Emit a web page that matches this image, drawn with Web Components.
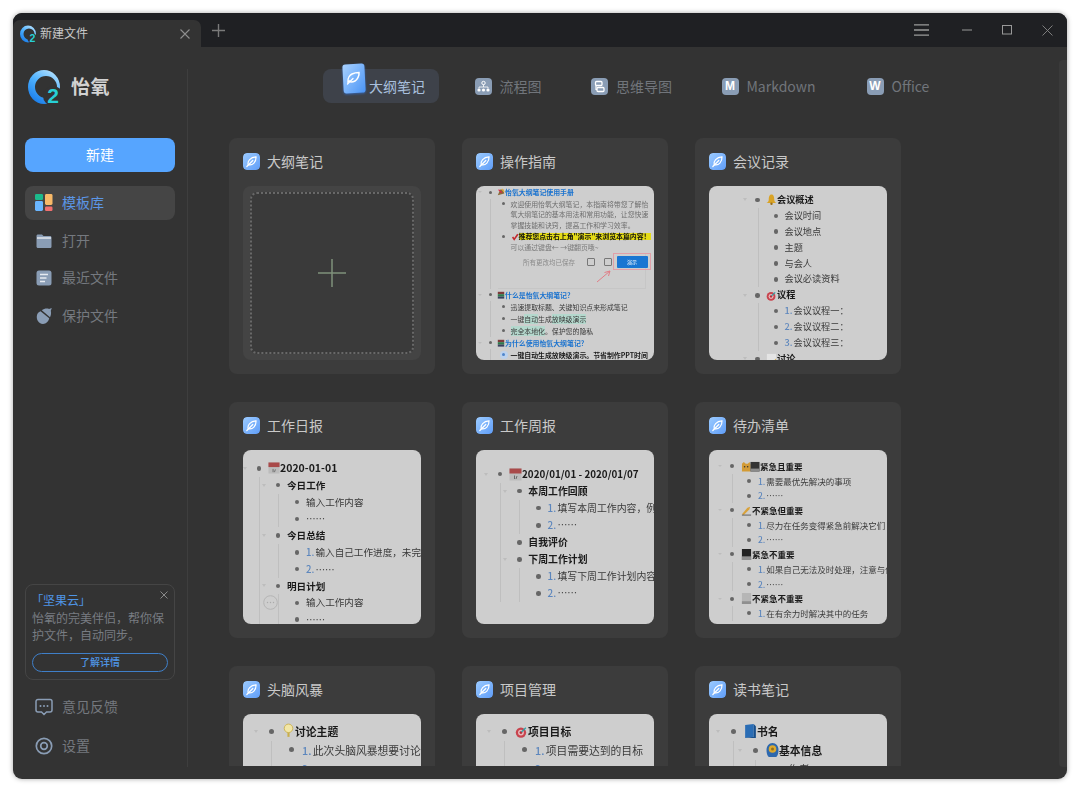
<!DOCTYPE html>
<html lang="zh"><head><meta charset="utf-8"><title>怡氧</title>
<style>
html,body{margin:0;padding:0;background:#fff;}
body{font-family:"Noto Sans CJK SC","Noto Sans",sans-serif;}
</style></head><body>
<app-window>
  <title-bar slot="top"></title-bar>
  <app-sidebar slot="side">
    <side-item icon="tpl" active>模板库</side-item>
    <side-item icon="folder">打开</side-item>
    <side-item icon="doc">最近文件</side-item>
    <side-item icon="acorn">保护文件</side-item>
    <promo-card slot="promo"></promo-card>
    <side-item slot="foot" icon="chat">意见反馈</side-item>
    <side-item slot="foot" icon="gear">设置</side-item>
  </app-sidebar>
  <mode-nav slot="nav">
    <nav-item active icon="pen">大纲笔记</nav-item>
    <nav-item icon="flow">流程图</nav-item>
    <nav-item icon="mind">思维导图</nav-item>
    <nav-item icon="M" style="margin-right:1.5px">Markdown</nav-item>
    <nav-item icon="W">Office</nav-item>
  </mode-nav>
  <tpl-grid slot="grid">
    <tpl-card name="大纲笔记"><blank-doc></blank-doc></tpl-card>
    <tpl-card name="操作指南"><tpl-outline tpl="guide"></tpl-outline></tpl-card>
    <tpl-card name="会议记录"><tpl-outline tpl="meeting"></tpl-outline></tpl-card>
    <tpl-card name="工作日报"><tpl-outline tpl="daily"></tpl-outline></tpl-card>
    <tpl-card name="工作周报"><tpl-outline tpl="weekly"></tpl-outline></tpl-card>
    <tpl-card name="待办清单"><tpl-outline tpl="todo"></tpl-outline></tpl-card>
    <tpl-card name="头脑风暴"><tpl-outline tpl="brain"></tpl-outline></tpl-card>
    <tpl-card name="项目管理"><tpl-outline tpl="project"></tpl-outline></tpl-card>
    <tpl-card name="读书笔记"><tpl-outline tpl="reading"></tpl-outline></tpl-card>
  </tpl-grid>
</app-window>
<script>
const FONT='"Noto Sans CJK SC","Noto Sans",sans-serif';
function logo(size,id){return `<svg style="display:block;flex:none;margin-bottom:${-size*5/32}px" width="${size}" height="${size*40/32}" viewBox="0 0 32 40">
<defs><linearGradient id="${id}" x1="0.8" y1="0" x2="0.2" y2="1"><stop offset="0" stop-color="#b8e3ff"/><stop offset=".45" stop-color="#4fb2ff"/><stop offset="1" stop-color="#1679e8"/></linearGradient></defs>
<path fill="url(#${id})" fill-rule="evenodd" d="M16 1A16 17 0 1 1 16 35A16 17 0 1 1 16 1ZM18 7A11 11 0 1 0 18 29A11 11 0 1 0 18 7Z"/>
<circle cx="25" cy="27" r="10" fill="#333"/>
<text x="25" y="34" text-anchor="middle" font-family="Liberation Sans,sans-serif" font-weight="700" font-size="21" fill="#27d0d6">2</text></svg>`;}
const penMark=`<path d="M5.2 11.7C4.200 8 7.400 4.300 13 3.900C13.300 8.900 9.700 13 5.200 11.700Z" fill="none" stroke="#fff" stroke-width="1.200"/><path d="M3.800 13.500L9.800 7.500" stroke="#fff" stroke-width="1.200" stroke-linecap="round"/>`;

const define=(n,c)=>customElements.define(n,c);
class Base extends HTMLElement{
  render(html){ if(!this.shadowRoot) this.attachShadow({mode:'open'}); this.shadowRoot.innerHTML=html; }
}

define('app-window',class extends Base{connectedCallback(){this.render(`<style>
:host{display:flex;flex-direction:column;box-sizing:border-box;width:1054px;height:766px;margin:13px;background:#333;border-radius:9px;overflow:hidden;box-shadow:0 0 5px rgba(0,0,0,.35);font-family:${FONT};}
.body{flex:1;min-height:0;display:flex;}
.main{flex:1;min-width:0;display:flex;}
.col{flex:1;min-width:0;display:flex;flex-direction:column;}
.bar{flex:none;width:8px;margin:13px 0 12px;background:#3a3a3a;border-radius:4px 0 0 4px;}
</style><slot name="top"></slot><div class="body"><slot name="side"></slot><div class="main"><div class="col"><slot name="nav"></slot><slot name="grid"></slot></div><div class="bar"></div></div></div>`);}});

define('title-bar',class extends Base{connectedCallback(){this.render(`<style>
:host{display:flex;flex:none;height:34px;background:#1f2023;align-items:stretch;color:#ccc;}
.tab{box-sizing:border-box;width:188px;height:27px;margin-top:7px;background:#333;border-radius:7px 7px 0 0;display:flex;align-items:center;padding:0 11px 0 7px;gap:4px;font-size:12px;color:#c8c8c8;}
.tab span{flex:1;padding-bottom:2px;}
.plus{width:34px;display:flex;align-items:center;justify-content:center;}
.sp{flex:1;}
.ctl{display:flex;align-items:center;justify-content:center;width:40px;}
svg{display:block;}
</style>
<div class="tab">${logo(16,'lg1')}<span>新建文件</span>
<svg width="10" height="10" viewBox="0 0 10 10"><path d="M.5.5L9.5 9.5M9.5.5L.5 9.5" stroke="#8d8d8d" stroke-width="1.1"/></svg></div>
<div class="plus"><svg width="13" height="13" viewBox="0 0 13 13"><path d="M6.5 0V13M0 6.5H13" stroke="#7a7a7a" stroke-width="1.4"/></svg></div>
<div class="sp"></div>
<div class="ctl" style="margin-right:6px"><svg width="15" height="12" viewBox="0 0 15 12"><path d="M0 .8H15M0 6H15M0 11.2H15" stroke="#9a9a9a" stroke-width="1.3"/></svg></div>
<div class="ctl"><svg width="10" height="2" viewBox="0 0 10 2"><path d="M0 1H10" stroke="#999" stroke-width="1"/></svg></div>
<div class="ctl"><svg width="10" height="10" viewBox="0 0 10 10"><rect x=".5" y=".5" width="9" height="8.5" fill="none" stroke="#999" stroke-width="1"/></svg></div>
<div class="ctl"><svg width="11" height="11" viewBox="0 0 11 11"><path d="M.5.5L10.5 10.5M10.5.5L.5 10.5" stroke="#888" stroke-width=".9"/></svg></div>`);}});

define('app-sidebar',class extends Base{connectedCallback(){this.render(`<style>
:host{display:flex;flex-direction:column;flex:none;box-sizing:border-box;width:175px;margin:22px 0 12px;padding:0 12px;border-right:1px solid #3e3e3e;}
.brand{display:flex;align-items:flex-start;height:35px;margin-left:3px;gap:11px;}
.brand b{font-size:19px;line-height:33px;letter-spacing:.5px;color:#d2d2d2;font-weight:700;}
.new{height:34px;margin-top:34px;border-radius:8px;background:#56a5ff;color:#fff;font-size:14px;display:flex;align-items:center;justify-content:center;}
.new span{padding-bottom:2px;}
.list{display:flex;flex-direction:column;gap:3.5px;margin-top:14px;}
.sp{flex:1;}
.foot{display:flex;flex-direction:column;gap:4.5px;margin-top:10px;margin-bottom:4.5px;}
</style>
<div class="brand">${logo(32,'lg2')}<b>怡氧</b></div>
<div class="new"><span>新建</span></div>
<div class="list"><slot></slot></div>
<div class="sp"></div>
<slot name="promo"></slot>
<div class="foot"><slot name="foot"></slot></div>`);}});

const sideIcons={
tpl:`<rect x="0" y="0" width="8" height="6" rx="1.2" fill="#1cbb8c"/><rect x="0" y="7" width="8" height="10" rx="1.4" fill="#6ab6ff"/><rect x="10" y="0" width="7.5" height="11" rx="1.4" fill="#f8b968"/><rect x="10" y="12.5" width="7.5" height="4.5" rx="1.2" fill="#f2706f"/>`,
folder:`<path d="M1.500 4C1.500 3 2.200 2.500 3 2.500H7L8.500 4H15C15.900 4 16.500 4.700 16.500 5.500V14.500C16.500 15.500 15.800 16 15 16H3C2.100 16 1.500 15.300 1.500 14.500Z" fill="#8a9db5"/><path d="M2 6H16" stroke="#e3e8ee" stroke-width="1.400"/>`,
doc:`<rect x="1.500" y="1.500" width="15" height="15" rx="2.500" fill="#8a9db5"/><path d="M5 5.500H13M5 9H11.500M5 12.500H10" stroke="#e6eaf0" stroke-width="1.400"/>`,
acorn:`<path d="M2 8C1 12 3 16.500 8 17C11 17 13.500 14.500 14.200 11.300L5.500 4.200C3.500 5 2.500 6 2 8Z" fill="#8a9db5"/><path d="M6.800 3.200C9 1.400 12.500 1.200 14 2L16.800 1L15.800 3.700C16.400 6 16 8.300 15 10.300Z" fill="#8a9db5"/>`,
chat:`<path d="M3 1.500H15A2 2 0 0 1 17 3.500V12A2 2 0 0 1 15 14H11.500L9 16.500L6.500 14H3A2 2 0 0 1 1 12V3.500A2 2 0 0 1 3 1.500Z" fill="none" stroke="#8a9db5" stroke-width="1.5"/><circle cx="5.500" cy="8" r="1" fill="#8a9db5"/><circle cx="9" cy="8" r="1" fill="#8a9db5"/><circle cx="12.500" cy="8" r="1" fill="#8a9db5"/>`,
gear:`<circle cx="9" cy="9" r="7.700" fill="none" stroke="#8a9db5" stroke-width="1.700"/><circle cx="9" cy="9" r="3.300" fill="none" stroke="#8a9db5" stroke-width="1.700"/>`
};
define('side-item',class extends Base{connectedCallback(){const a=this.hasAttribute('active');this.render(`<style>
:host{display:flex;align-items:center;height:34px;border-radius:8px;padding-left:10px;gap:9px;font-size:14px;color:${a?'#5b96e6':'#75797f'};background:${a?'#454545':'transparent'};}
svg{flex:none;display:block;}
span{padding-bottom:2px;}
</style><svg width="18" height="18" viewBox="0 0 18 18">${sideIcons[this.getAttribute('icon')]}</svg><span><slot></slot></span>`);}});

define('promo-card',class extends Base{connectedCallback(){this.render(`<style>
:host{display:block;position:relative;box-sizing:border-box;height:96px;border:1px solid #454545;border-radius:8px;padding:6px 6px 0 6px;font-size:12px;line-height:17px;color:#787c82;}
.t{color:#4f95e6;margin:0 0 1px 5px;font-feature-settings:"palt";}
.x{position:absolute;right:6px;top:6px;display:block;}
.b{height:19px;box-sizing:border-box;margin-top:10px;border:1px solid #3f7fc8;border-radius:10px;color:#4f95e6;display:flex;align-items:center;justify-content:center;line-height:1;font-size:10px;font-weight:500;padding-bottom:1px;}
</style><svg class="x" width="8" height="8" viewBox="0 0 8 8"><path d="M.5.5L7.500 7.500M7.500.5L.5 7.500" stroke="#8a8a8a" stroke-width="1"/></svg>
<div class="t">「坚果云」</div><div>怡氧的完美伴侣，帮你保<br>护文件，自动同步。</div><div class="b">了解详情</div>`);}});

define('mode-nav',class extends Base{connectedCallback(){this.render(`<style>
:host{display:flex;flex:none;height:34px;margin-top:22px;padding-left:135px;gap:21.5px;}
</style><slot></slot>`);}});

const navIcons={
flow:`<circle cx="8.500" cy="5" r="1.700" fill="none" stroke="#fff" stroke-width="1"/><path d="M8.500 6.500V9M4 10.500V9H13V10.500" fill="none" stroke="#fff" stroke-width=".8"/><circle cx="4" cy="12" r="1.600" fill="#fff"/><circle cx="8.500" cy="12" r="1.600" fill="#fff"/><circle cx="13" cy="12" r="1.600" fill="#fff"/>`,
mind:`<rect x="4.500" y="3.500" width="6.500" height="4" rx="1" fill="none" stroke="#fff" stroke-width="1.300"/><rect x="6" y="9.500" width="7" height="4" rx="1" fill="none" stroke="#fff" stroke-width="1.300"/><path d="M5 7.500V11.500H6" fill="none" stroke="#fff" stroke-width="1.200"/>`
};
define('nav-item',class extends Base{connectedCallback(){
 const a=this.hasAttribute('active'),ic=this.getAttribute('icon');
 let icon;
 if(a) icon=`<div class="pop"><svg width="24" height="32" viewBox="0 0 24 32"><defs><linearGradient id="pg" x1="0" y1="0" x2="1" y2="1"><stop offset="0" stop-color="#a9d2ff"/><stop offset="1" stop-color="#4a94f6"/></linearGradient></defs><rect x="1" y="1" width="22" height="29" rx="3" fill="url(#pg)" transform="rotate(-3 12 15)"/><path d="M6 19C5.500 15 8 12 10 11C12 10 15 9.500 17 9.500C17.500 13 15 17 13 18C11 19 8.500 19.500 7.500 18Z" fill="none" stroke="#fff" stroke-width="1.500"/><path d="M5.500 21L11 15.500" stroke="#fff" stroke-width="1.300" stroke-linecap="round"/></svg></div>`;
 else if(ic==='M'||ic==='W') icon=`<div class="ic"><i>${ic}</i></div>`;
 else icon=`<div class="ic"><svg width="17" height="17" viewBox="0 0 17 17">${navIcons[ic]}</svg></div>`;
 this.render(`<style>
:host{display:flex;position:relative;align-items:center;height:34px;padding:0 14px;border-radius:8px;font-size:14px;color:${a?'#a9c0de':'#71757b'};background:${a?'#3e424a':'transparent'};}
.ic{width:17px;height:17px;border-radius:4px;background:#8a9db5;margin-right:8px;display:flex;align-items:center;justify-content:center;flex:none;}
.ic i{font:700 12px "Liberation Sans",sans-serif;color:#fff;}
.ic svg{display:block;}
.sp{width:32px;flex:none;}
.pop{position:absolute;left:19px;top:-6px;filter:drop-shadow(0 1px 1px rgba(50,120,230,.6));}
.pop svg{display:block;}
.tx{padding-bottom:1px;}
</style>${a?icon+'<div class="sp"></div>':icon}<span class="tx"><slot></slot></span>`);
}});

define('tpl-grid',class extends Base{connectedCallback(){this.render(`<style>
:host{display:block;flex:1;min-height:0;overflow:hidden;margin:35px 0 13px 41px;}
.g{display:grid;grid-template-columns:repeat(3,206px);grid-auto-rows:236px;column-gap:27px;row-gap:28px;}
</style><div class="g"><slot></slot></div>`);}});

define('tpl-card',class extends Base{connectedCallback(){this.render(`<style>
:host{display:flex;flex-direction:column;box-sizing:border-box;height:236px;padding:15px 14px 0;background:#3c3c3c;border-radius:8px;}
.h{display:flex;align-items:center;gap:7px;height:17px;font-size:14px;color:#c9c9c9;white-space:nowrap;}
.h svg{display:block;flex:none;border-radius:4px;}
.h span{padding-bottom:2px;}
.b{margin-top:16px;height:174px;}
</style><div class="h"><svg width="17" height="17" viewBox="0 0 17 17"><defs><linearGradient id="c" x1="0" y1="0" x2="1" y2="1"><stop offset="0" stop-color="#9ccbff"/><stop offset="1" stop-color="#5f9df8"/></linearGradient></defs><rect width="17" height="17" rx="4" fill="url(#c)"/>${penMark}</svg><span>${this.getAttribute('name')}</span></div><div class="b"><slot></slot></div>`);}});

define('blank-doc',class extends Base{connectedCallback(){this.render(`<style>
:host{display:flex;box-sizing:border-box;width:178px;height:174px;padding:6px 7px;background:#444;border-radius:8px;}
.d{flex:1;display:flex;align-items:center;justify-content:center;background:#3a3a3a;border:2px dotted #686868;border-radius:7px;}
svg{display:block;}
</style><div class="d"><svg width="28" height="28" viewBox="0 0 28 28"><path d="M14 0V28M0 14H28" stroke="#7f917b" stroke-width="1.500"/></svg></div>`);}});

/* tiny colour pictures used as emoji in the outlines */
const em={
bell:w=>`<svg width="${w}" height="${w}" viewBox="0 0 12 12"><path d="M6 .5C3.500 .5 3 3.500 3 6C3 8 2 9 .5 9.800H11.500C10 9 9 8 9 6C9 3.500 8.500 .5 6 .5Z" fill="#d9a326"/><circle cx="6" cy="10.600" r="1.300" fill="#9b6d12"/></svg>`,
target:w=>`<svg width="${w}" height="${w}" viewBox="0 0 12 12"><circle cx="5.500" cy="7" r="4.800" fill="#c8444e"/><circle cx="5.500" cy="7" r="2.700" fill="#e7b9bb"/><circle cx="5.500" cy="7" r="1.300" fill="#b82a36"/><path d="M6 6.500L10 2.500" stroke="#2aa3a8" stroke-width="1.200"/></svg>`,
paper:w=>`<svg width="${w}" height="${w}" viewBox="0 0 12 12"><rect x="1" y="1" width="10" height="10" fill="#e4e4e4"/><path d="M6 11L11 6V11Z" fill="#d2a640"/></svg>`,
cal:w=>`<svg width="${w}" height="${w}" viewBox="0 0 13 13"><rect x=".5" y=".5" width="12" height="12" fill="#bcbcbc"/><rect x=".5" y=".5" width="12" height="5" fill="#a94a4a"/><path d="M5.500 7.500V11M8 8L7 11" stroke="#555" stroke-width=".8"/></svg>`,
cone:w=>`<svg width="${w}" height="${w}" viewBox="0 0 10 10"><path d="M1 9L4 2H8L9 7Z" fill="#8a6a3a"/><path d="M2 2L6 6" stroke="#d24" stroke-width="1.500"/><path d="M6 1L9 5" stroke="#e4b23c" stroke-width="1.500"/></svg>`,
check:w=>`<svg width="${w}" height="${w}" viewBox="0 0 10 10"><path d="M2 5L4 8L8.500 1.500" fill="none" stroke="#c2282d" stroke-width="2"/></svg>`,
books:w=>`<svg width="${w}" height="${w}" viewBox="0 0 10 10"><rect x="1" y="1" width="8" height="3" fill="#7d3a3a"/><rect x="1" y="4" width="8" height="3" fill="#2f7a4c"/><rect x="1" y="7" width="8" height="2.500" fill="#39405e"/></svg>`,
bulb:w=>`<svg width="${w}" height="${w+3}" viewBox="0 0 12 15"><circle cx="6" cy="5" r="4" fill="#f2e6a6" stroke="#c9ae4a" stroke-width=".8"/><path d="M5 9V13H7V9" fill="#c9ae4a"/></svg>`,
book:w=>`<svg width="${w}" height="${w+2}" viewBox="0 0 12 14"><path d="M1 1L9 0V12L1 13Z" fill="#2a6db5"/><path d="M9 0L11 2V13L1 13L9 12Z" fill="#174f8c"/></svg>`,
badge:w=>`<svg width="${w}" height="${w+2}" viewBox="0 0 13 15"><path d="M6.500 0C3 0 .5 3 .5 7C.5 11 2 14 3 14H10C11 14 12.500 11 12.500 7C12.500 3 10 0 6.500 0Z" fill="#2d68ae"/><circle cx="6.500" cy="6" r="3.800" fill="#dca92f"/><circle cx="6.500" cy="6" r="1.500" fill="#94701a"/></svg>`,
cat:w=>`<svg width="${w}" height="${w*.6}" viewBox="0 0 20 12"><path d="M1 3L3 1L5 3H7L9 1L10 4V11H1Z" fill="#d39b35"/><circle cx="3.800" cy="6" r=".8" fill="#333"/><circle cx="7" cy="6" r=".8" fill="#333"/><rect x="10" y="1" width="9.500" height="10" fill="#333"/><rect x="10" y="8" width="9.500" height="3" fill="#8b8b8b"/></svg>`,
write:w=>`<svg width="${w}" height="${w}" viewBox="0 0 12 12"><path d="M1 10L7 3L10 2L9 5L3 11Z" fill="#d9a23a"/><path d="M1 11H11" stroke="#555" stroke-width="1"/></svg>`,
black:w=>`<svg width="${w}" height="${w}" viewBox="0 0 12 12"><rect x="1" y="0" width="10" height="12" fill="#222"/><rect x="1" y="8" width="10" height="4" fill="#8f8f8f"/></svg>`,
gray:w=>`<svg width="${w}" height="${w}" viewBox="0 0 12 12"><rect x="1" y="0" width="10" height="12" fill="#b6b6b6"/><rect x="1" y="9" width="10" height="3" fill="#8f8f8f"/></svg>`
};
const N=(t,c,o)=>Object.assign({t,c},o||{});
const B=(t,c,o)=>N(t,c,Object.assign({b:1},o||{}));
const num=(n,t)=>({n,t});
const HL='#b4d8cd';
const mark=s=>`<span style="background:${HL}">${s}</span>`;
const configs={
 meeting:{pad:6,left:30,step:18.5,tw:12,dw:13,mr:2,rh:15.9,fs:9.2,iw:11,ds:4.5,tree:[
  B('会议概述',[N('会议时间'),N('会议地点'),N('主题'),N('与会人'),N('会议必读资料')],{i:'bell'}),
  B('议程',[num('1.','会议议程一：'),num('2.','会议议程二：'),num('3.','会议议程三：')],{i:'target'}),
  B('讨论',null,{i:'paper'})]},
 daily:{pad:10,left:-4,step:19,tw:12,dw:16,mr:1,rh:16.8,fs:9.6,iw:12,ds:4.5,dots:1,tree:[
  B('2020-01-01',[B('今日工作',[N('输入工作内容'),N('……')]),B('今日总结',[num('1.','输入自己工作进度，未完成的工作'),num('2.','……')]),B('明日计划',[N('输入工作内容'),N('……')])],{i:'cal',fs:10.5})]},
 weekly:{pad:15.5,left:4,step:19.3,tw:12,dw:16,mr:1,rh:17.1,fs:9.9,iw:13,ds:4.5,tree:[
  B('2020/01/01 - 2020/01/07',[B('本周工作回顾',[num('1.','填写本周工作内容，例如完成'),num('2.','……')]),B('自我评价',null),B('下周工作计划',[num('1.','填写下周工作计划内容，例如'),num('2.','……')])],{i:'cal'})]},
 todo:{pad:9,left:6,step:17,tw:10,dw:14,mr:2,rh:14.7,fs:8.5,iw:10,ds:4,tree:[
  B('紧急且重要',[num('1.','需要最优先解决的事项'),num('2.','……')],{i:'cat',iw:19}),
  B('不紧急但重要',[num('1.','尽力在任务变得紧急前解决它们'),num('2.','……')],{i:'write',iw:11}),
  B('紧急不重要',[num('1.','如果自己无法及时处理，注意与他人沟通'),num('2.','……')],{i:'black',iw:11}),
  B('不紧急不重要',[num('1.','在有余力时解决其中的任务')],{i:'gray',iw:11})]},
 brain:{pad:8,left:7,step:20,tw:12,dw:18,mr:2,rh:18.5,fs:10.8,iw:13,ds:5,tree:[
  B('讨论主题',[num('1.','此次头脑风暴想要讨论的问题'),num('2.','……')],{i:'bulb'})]},
 project:{pad:8,left:7,step:20,tw:12,dw:18,mr:2,rh:18.5,fs:10.8,iw:13,ds:5,tree:[
  B('项目目标',[num('1.','项目需要达到的目标'),num('2.','……')],{i:'target'})]},
 reading:{pad:8,left:3,step:22,tw:12,dw:18,mr:2,rh:18.8,fs:10.8,iw:13,ds:5,tree:[
  B('书名',[B('基本信息',[N('作者：')],{i:'badge'})],{i:'book'})]},
 guide:{pad:0,left:0,step:13.5,tw:8,dw:12,mr:1,rh:12,fs:6.9,iw:8,ds:3,guide:1,tree:[
  {blue:1,b:1,i:'cone',t:'怡氧大纲笔记使用手册',c:[
    {nt:1,multi:1,gray:1,t:'欢迎使用怡氧大纲笔记，本指南将带您了解怡<br>氧大纲笔记的基本用法和常用功能，让您快速<br>掌握技能和诀窍，提高工作和学习效率。'},
    {nt:1,b:1,i:'check',yellow:1,t:'推荐您点击右上角"演示"来浏览本篇内容！',sub:'可以通过键盘← →键翻页哦~',shot:1}]},
  {blue:1,b:1,i:'books',t:'什么是怡氧大纲笔记?',c:[
    {nt:1,t:'迅速提取标题、关键知识点来形成笔记'},
    {nt:1,t:'一键'+mark('自动')+'生成'+mark('放映级演示')},
    {nt:1,t:mark('完全本地化')+'。保护您的隐私'}]},
  {blue:1,b:1,i:'books',t:'为什么使用怡氧大纲笔记?',c:[
    {nt:1,b:1,focus:1,t:'一键自动生成放映级演示。节省制作PPT时间'}]}]}
};
define('tpl-outline',class extends Base{connectedCallback(){
 const cfg=configs[this.getAttribute('tpl')];
 const shot=`<div class="shot"><div class="st"><span class="sv">所有更改均已保存</span><i class="sq"></i><i class="sq"></i><span class="pk"><span class="bt">演示</span></span></div>
 <svg class="arrow" width="18" height="16" viewBox="0 0 18 16"><path d="M1 15L14 4M14 4L8.500 5.500M14 4L12.500 9" fill="none" stroke="#e07d86" stroke-width="1"/></svg></div>`;
 const nodeHtml=(n)=>{
  const hasKids=n.c&&n.c.length;
  const style=n.fs?`font-size:${n.fs}px;`:'';
  const ic=n.i?`<span class="em" style="width:${n.iw||cfg.iw}px">${em[n.i](n.iw||cfg.iw)}</span>`:'';
  const cls=['tx',n.b?'b':'',n.blue?'blue':'',n.gray?'gray':'',n.multi?'multi':'',n.yellow?'yl':''].join(' ');
  const body=n.n?`<span class="n">${n.n}</span> ${n.t}`:n.t;
  let h=`<div class="node"><div class="row${n.multi?' mrow':''}"><span class="tri">${hasKids||(cfg.tree.includes(n))?'<i></i>':''}</span><span class="dotbox${n.focus?' fc':''}"><i></i></span>${ic}<span class="${cls}" style="${style}">${body}</span></div>`;
  if(n.sub) h+=`<div class="sub">${n.sub}</div>`;
  if(n.shot) h+=shot;
  if(hasKids) h+=`<div class="kids">${n.c.map(nodeHtml).join('')}</div>`;
  return h+'</div>';
 };
 const dots=cfg.dots?`<svg class="more" width="15" height="15" viewBox="0 0 15 15"><circle cx="7.500" cy="7.500" r="6.800" fill="none" stroke="#b4b4b4" stroke-width="1"/><circle cx="4.500" cy="7.500" r=".7" fill="#aaa"/><circle cx="7.500" cy="7.500" r=".7" fill="#aaa"/><circle cx="10.500" cy="7.500" r=".7" fill="#aaa"/></svg>`:'';
 const ds=cfg.ds||4;
 this.render(`<style>
:host{display:block;position:relative;width:178px;height:174px;overflow:hidden;background:#cecece;border-radius:8px;font-size:${cfg.fs}px;color:#3a3a3a;line-height:${cfg.rh}px;}
.in{filter:blur(.35px);padding-top:${cfg.pad}px;margin-left:${cfg.left}px;white-space:nowrap;}
.row{display:flex;align-items:center;height:${cfg.rh}px;}
.mrow{height:auto;align-items:flex-start;margin-top:.5px;}
.tri{flex:none;width:${cfg.tw}px;display:flex;justify-content:center;}
.tri i{display:block;width:0;height:0;border:${Math.max(2,cfg.fs*.26)}px solid transparent;border-top:${Math.max(2.5,cfg.fs*.34)}px solid #bdbdbd;border-bottom:0;}
.dotbox{flex:none;width:${cfg.dw}px;margin-right:${cfg.mr}px;display:flex;justify-content:center;align-items:center;}
.mrow .dotbox{height:10.800px;}
.dotbox i{display:block;width:${ds}px;height:${ds}px;border-radius:50%;background:#666;}
.fc{position:relative;}
.fc::before{content:"";position:absolute;left:50%;top:50%;width:8px;height:8px;margin:-4px;border-radius:50%;background:#bcd2ee;}
.fc i{position:relative;background:#4f86cc;}
.em{flex:none;display:flex;align-items:center;}
.em svg{display:block;}
.tx{display:inline-block;}
.b{font-weight:700;color:#1a1a1a;}
.blue{color:#1b73cf;}
.gray{color:#6f6f6f;}
.multi{line-height:10.800px;}
.yl{background:#e5dc17;color:#111;line-height:7px;padding-right:1px;}
.n{color:#5c86bd;font-weight:500;margin-right:-1px;}
.kids{padding-left:${cfg.step}px;background:linear-gradient(#bfbfbf,#bfbfbf) no-repeat ${cfg.tw+cfg.dw/2}px 0/1px 100%;}
.sub{height:9px;line-height:9px;margin-left:${cfg.tw+cfg.dw+cfg.mr}px;color:#7a7a7a;}
.shot{position:relative;box-sizing:border-box;height:36px;margin-left:${cfg.tw+cfg.dw/2-6}px;width:148px;border:1px solid #c6c6c6;border-width:0 1px 1px 0;margin-top:1px;}
.st{display:flex;align-items:center;height:18px;margin-left:25.500px;font-size:6.500px;color:#8b8b8b;line-height:1;}
.sv{width:64px;flex:none;}
.sq{display:block;flex:none;box-sizing:border-box;width:8px;height:8px;border:1px solid #777;border-radius:1px;margin-right:9px;}
.sq+.sq{margin-right:1px;}
.pk{box-sizing:border-box;flex:none;height:17px;width:38px;border:1px solid #e0a0a8;display:flex;align-items:center;justify-content:center;}
.bt{width:31px;height:12px;background:#1976d2;color:#fff;font-size:5px;display:flex;align-items:center;justify-content:center;border-radius:1px;}
.arrow{position:absolute;left:98px;top:14px;}
.more{position:absolute;left:20px;top:145px;}
</style><div class="in">${cfg.tree.map(nodeHtml).join('')}</div>${dots}`);
}});
</script>
</body></html>
